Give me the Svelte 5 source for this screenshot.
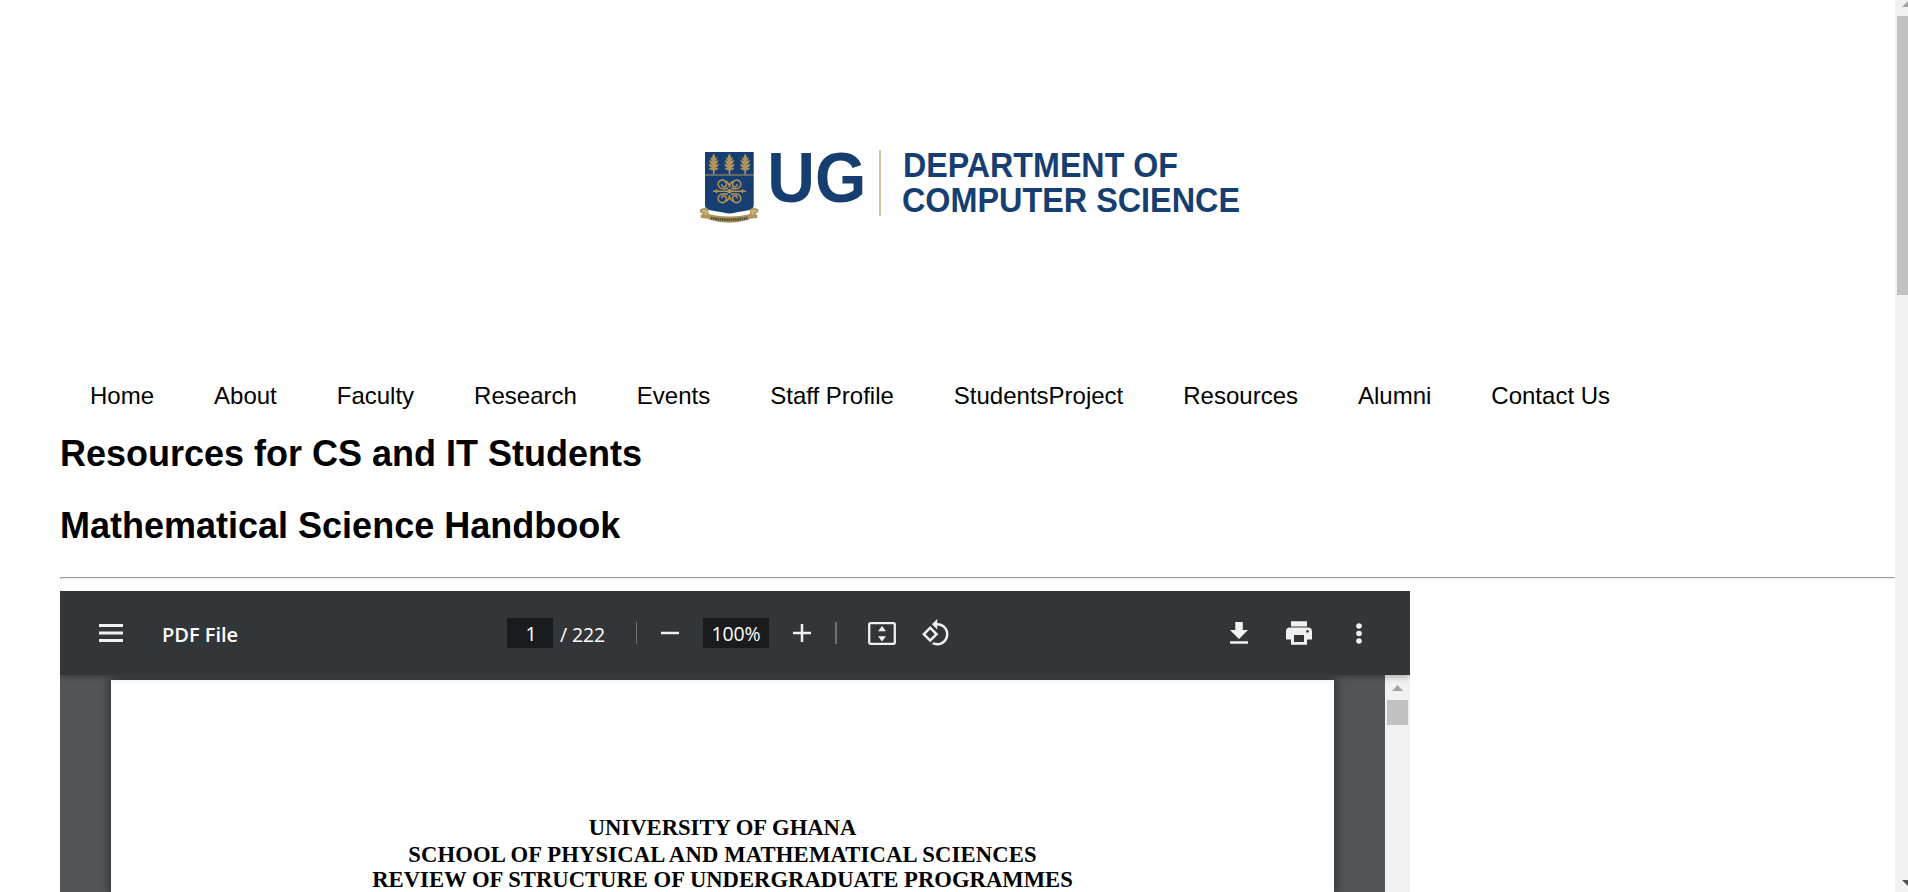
<script>
  const links = ['Home', 'About', 'Faculty', 'Research', 'Events', 'Staff Profile', 'StudentsProject', 'Resources', 'Alumni', 'Contact Us'];
</script>

<div class="window">
  <main>
    <header>
      <svg class="logo" width="560" height="90" viewBox="690 140 560 90">
        <path d="M705 152h48.700v53q0 4-4 5l-14 2.500q-4 .8-6.300 1-2.300-.2-6.400-1l-14-2.500q-4-1-4-5z" fill="#163e70" />
        <path d="M705 175h48.700" stroke="#b2945b" stroke-width="1" />
        {#each [713.7, 729.5, 745.2] as x}
          <g transform="translate({x} 153.500)" fill="#b2945b">
            <path d="M0 0l1.800 3.500-.8 1.500 2.800-1.200-1.300 3-1.500 1 4-1.300-1.800 3.500-2.200 1.200 4.500-1-2.200 3.600-2.300.9 4.300-.4q-1.800 2.700-4.500 2.700v4h-1.600v-4q-2.700 0-4.500-2.700l4.300.4-2.300-.9-2.200-3.600 4.500 1-2.200-1.200-1.800-3.500 4 1.300-1.500-1-1.300-3 2.800 1.200-.8-1.500z" />
          </g>
        {/each}
        <g fill="none" stroke="#b2945b" stroke-width="1.500">
          {#each ['1 1', '-1 1', '1 -1', '-1 -1'] as s}
            <path transform="translate(729.5 191.3) scale({s})" d="M1.500 3q7-1.500 9 1.500a4.200 4.200 0 1 1-7.500 2.500q.3-2.700 3-2.500 2.300.7 1.300 2.700M0 4q0 4.500 4 6" />
          {/each}
          <path d="M713 191.300h33M716.500 189.300v4M742.500 189.300v4" />
        </g>
        <circle cx="729.5" cy="191.300" r="2.300" fill="#b2945b" />
        <path d="M700 209.500q5-2.500 8.500-.5v5q21 5 41.500 0v-5q4-2 8.500.5l-.5 3-3 .7 2.500 2.300-.5 2.500q-6 0-8 1.500-20 6.500-40 0-2-1.500-8-1.500l-.5-2.500 2.500-2.300-3-.7z" fill="#b2945b" />
        <path d="M702 211.200q3.500-1 5 .3l-2 3.200M756.500 211.200q-3.500-1-5 .3l2 3.200" stroke="#e6dbc4" fill="none" />
        <path d="M711 218q18.500 3.500 37 0" stroke="#4c503f" stroke-width="3" stroke-dasharray="1.500 .7" fill="none" />
        <g fill="#163e70" font-family="Liberation Sans, Arial, sans-serif" font-weight="700">
          <text transform="translate(767.200 201.500) scale(.937 1)" font-size="70.500">UG</text>
          <text x="903" y="176.700" font-size="35" textLength="275" lengthAdjust="spacingAndGlyphs">DEPARTMENT OF</text>
          <text x="902" y="211.700" font-size="35" textLength="338" lengthAdjust="spacingAndGlyphs">COMPUTER SCIENCE</text>
        </g>
        <path d="M880 150v66" stroke="#d3c19c" stroke-width="2" />
      </svg>
    </header>
    <nav>
      {#each links as link}<a href="#top">{link}</a>{/each}
    </nav>
    <h1>Resources for CS and IT Students</h1>
    <h1>Mathematical Science Handbook</h1>
    <hr />
    <section class="viewer">
      <div class="toolbar">
        <svg class="menu" width="24" height="18" fill="#f1f1f1"><path d="M0 0h24v3H0zM0 7.500h24v3H0zM0 15h24v3H0z" /></svg>
        <span class="title">PDF File</span>
        <span class="box page-no">1</span>
        <span class="total">/ 222</span>
        <i class="sep"></i>
        <svg class="minus" width="18" height="18"><path d="M0 9h18" stroke="#f1f1f1" stroke-width="2.500" /></svg>
        <span class="box zoom">100%</span>
        <svg class="plus" width="18" height="18"><path d="M0 9h18M9 0v18" stroke="#f1f1f1" stroke-width="2.500" /></svg>
        <i class="sep second"></i>
        <svg class="fit" width="28" height="23" fill="#f1f1f1"><rect x="1.200" y="1.200" width="25.600" height="20.600" rx="1.500" fill="none" stroke="#f1f1f1" stroke-width="2.300" /><path d="M14 4l4 5.300h-8zM14 19.500l4-5.300h-8z" /></svg>
        <svg class="rotate" width="36" height="36" viewBox="0 0 24 24" fill="#f1f1f1"><path d="M7.340 6.410L.86 12.900l6.490 6.480 6.490-6.480-6.500-6.490zM3.690 12.900l3.660-3.660L11 12.900l-3.660 3.660-3.650-3.660zm15.670-6.260C17.610 4.880 15.300 4 13 4V.76L8.760 5 13 9.240V6c1.790 0 3.580.68 4.950 2.050 2.730 2.730 2.730 7.170 0 9.900C16.580 19.320 14.790 20 13 20c-.97 0-1.940-.21-2.840-.61l-1.490 1.490C10.020 21.620 11.510 22 13 22c2.300 0 4.610-.88 6.360-2.640 3.520-3.510 3.520-9.210 0-12.720z" /></svg>
        <svg class="download" width="18" height="22" fill="#f1f1f1"><path d="M5.300 0h7.500v8H18l-9 9-9-9h5.300zM0 19.200h18v2.500H0z" /></svg>
        <svg class="print" width="26" height="24" fill="#f1f1f1"><path fill-rule="evenodd" d="M5 .2h16v5.300H5zM4 6.500h18q4 0 4 4v8h-5v5.300H5v-5.300H0v-8q0-4 4-4zM8 14v7h10v-7zM21.500 9a1.400 1.400 0 1 0 .01 0z" /></svg>
        <svg class="more" width="6" height="21" fill="#f1f1f1"><circle cx="3" cy="3" r="2.800" /><circle cx="3" cy="10.500" r="2.800" /><circle cx="3" cy="18" r="2.800" /></svg>
      </div>
      <div class="body">
        <div class="canvas">
          <article>
            <p class="l1">UNIVERSITY OF GHANA</p>
            <p class="l2">SCHOOL OF PHYSICAL AND MATHEMATICAL SCIENCES</p>
            <p>REVIEW OF STRUCTURE OF UNDERGRADUATE PROGRAMMES</p>
          </article>
        </div>
        <div class="inner-bar">
          <svg width="25" height="25"><path d="M12.500 10l5.500 6H7z" fill="#a3a3a3" /></svg>
          <div></div>
        </div>
      </div>
    </section>
  </main>
  <aside>
    <svg width="13" height="16"><path d="M7 7l6-6v6z" fill="#a3a3a3" /></svg>
    <div class="thumb"></div>
    <svg class="down" width="13" height="12"><path d="M7 0h6v6z" fill="#505050" /></svg>
  </aside>
</div>

<style>
  :global(body) { margin: 0; overflow: hidden; }
  .window { display: flex; height: 892px; overflow: hidden; background: #fff; font-family: "Liberation Sans", Arial, sans-serif; color: #000; }
  main { width: 1835px; padding-left: 60px; overflow: hidden; }
  header { height: 380px; padding-left: 630px; box-sizing: border-box; padding-top: 140px; }
  .logo { display: block; overflow: visible; }
  nav { display: flex; gap: 60px; padding-left: 30px; height: 52px; font-size: 24px; line-height: 32px; }
  a { color: #000; text-decoration: none; white-space: nowrap; }
  h1 { margin: 0; font-size: 36px; line-height: 44px; height: 72px; }
  hr { margin: 1px 0 12px; border: 1px solid; border-color: #9a9a9a #eee #eee #9a9a9a; }
  .viewer { width: 1350px; }
  .toolbar { position: relative; z-index: 1; display: flex; align-items: center; height: 84px; box-sizing: border-box; background: #323639; color: #fff; font-family: "Open Sans", "Noto Sans", sans-serif; font-size: 20px; padding-left: 39px; box-shadow: 0 2px 6px rgba(0,0,0,.3); clip-path: inset(0 0 -10px 0); white-space: nowrap; }
  .toolbar > * { flex: none; }
  .title { width: 345px; margin-left: 39px; padding-top: 2px; font-weight: 600; font-size: 20px; letter-spacing: 0; }
  .box { background: #191b1c; height: 30px; line-height: 32px; text-align: center; }
  .page-no { width: 46px; text-indent: 2px; font-size: 19.500px; }
  .total { width: 83px; padding: 2px 0 0 7px; box-sizing: border-box; font-size: 19.500px; letter-spacing: -.1px; }
  .sep { width: 1px; height: 22px; background: #6f7274; }
  .sep.second { width: 2px; margin-left: 24px; }
  .minus { margin-left: 24px; }
  .zoom { width: 66px; margin-left: 24px; font-size: 19.500px; letter-spacing: -.1px; }
  .plus { margin-left: 24px; }
  .fit { margin-left: 31px; }
  .rotate { margin-left: 25px; width: 30px; height: 30px; }
  .download { margin-left: 279px; }
  .print { margin-left: 38px; }
  .more { margin-left: 44px; }
  .body { display: flex; height: 217px; }
  .canvas { width: 1325px; padding: 5px 51px 0; box-sizing: border-box; background: #525659; }
  article { width: 1223px; height: 212px; padding-top: 135px; box-sizing: border-box; background: #fff; box-shadow: 0 0 9px 2px rgba(0,0,0,.45); font: 700 22.670px/26px "Liberation Serif", "Times New Roman", serif; text-align: center; white-space: nowrap; }
  p { margin: 0; }
  .l1 { height: 27px; }
  .l2 { height: 25px; letter-spacing: .15px; }
  .inner-bar { width: 25px; background: #f1f1f1; }
  .inner-bar svg { display: block; }
  .inner-bar div { width: 21px; height: 25px; margin-left: 2px; background: #c1c1c1; }
  aside { width: 13px; display: flex; flex-direction: column; background: #f1f1f1; }
  .thumb { height: 279px; margin-left: 2px; background: #c1c1c1; }
  .down { margin-top: auto; }
</style>
